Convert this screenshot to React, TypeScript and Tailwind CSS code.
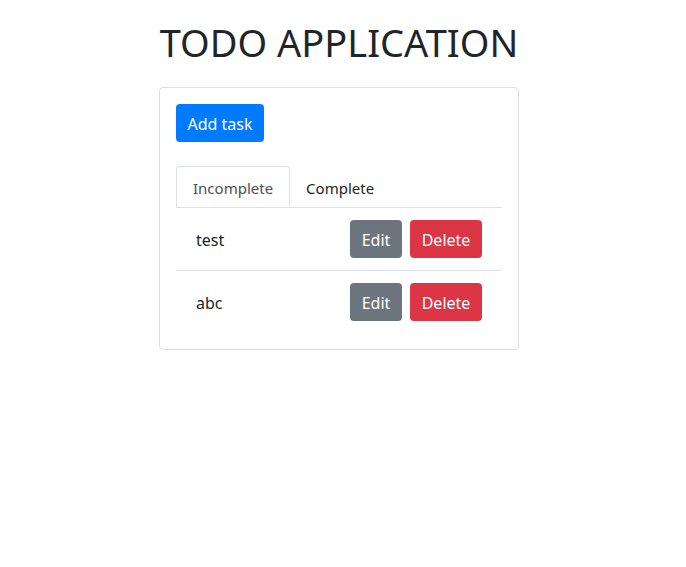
import React from "react";

const tasks = ["test", "abc"];

export default function App() {
  return (
    <div
      className="min-h-[567px] bg-white text-[#212529]"
      style={{ fontFamily: '"Noto Sans", "Open Sans", sans-serif' }}
    >
      <div className="flex flex-col items-center pt-[18px]">
        <h1 className="text-[38px] leading-[48px] font-normal mb-[21px] ml-[-8px]">TODO APPLICATION</h1>
        <div className="w-[360px] ml-[-8px] border border-[#dfdfdf] rounded-[4px] p-4">
          <button className="h-[38px] w-[88px] pt-[1px] bg-[#007bff] text-white text-[16px] rounded-[4px] leading-6">
            Add task
          </button>
          <div className="mt-[24px] flex border-b border-[#dee2e6]">
            <div className="h-[41px] mb-[-1px] px-4 pt-[3px] flex items-center border border-[#dee2e6] border-b-white bg-white rounded-t-[4px] text-[#495057] text-[15px]">
              Incomplete
            </div>
            <div className="h-[41px] px-4 pt-[3px] flex items-center text-[#212529] text-[15px]">
              Complete
            </div>
          </div>
          <div className="flex flex-col">
            {tasks.map((t, i) => (
              <div
                key={t}
                className={
                  "flex items-center justify-between px-5 py-3 " +
                  (i < tasks.length - 1 ? "border-b border-[#dee2e6]" : "")
                }
              >
                <span className="text-[16px] pt-[2px]">{t}</span>
                <div className="flex gap-2">
                  <button className="h-[38px] w-[52px] pt-[2px] bg-[#6c757d] text-white text-[16px] rounded-[4px]">
                    Edit
                  </button>
                  <button className="h-[38px] w-[72px] pt-[2px] bg-[#dc3545] text-white text-[16px] rounded-[4px]">
                    Delete
                  </button>
                </div>
              </div>
            ))}
          </div>
        </div>
      </div>
    </div>
  );
}
